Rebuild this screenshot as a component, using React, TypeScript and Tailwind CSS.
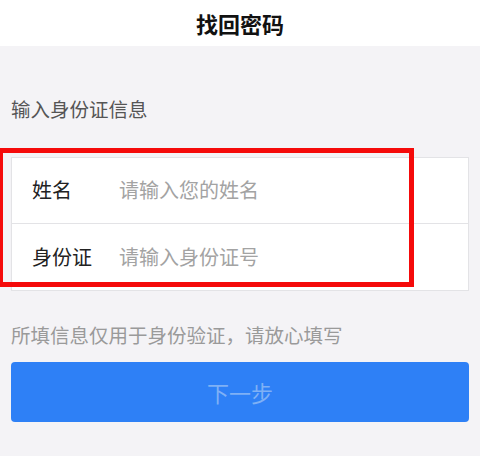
export default function App() {
  const font = { fontFamily: '"Noto Sans CJK SC", "Noto Sans", sans-serif' };

  return (
    <div className="relative w-[480px] h-[456px] bg-[#f4f3f6] overflow-hidden" style={font}>
      {/* Header */}
      <div className="h-[46px] bg-white flex items-center justify-center">
        <h1 className="text-[22px] font-bold text-[#111] leading-none">找回密码</h1>
      </div>

      <div className="px-[11px]">
        <p className="pt-[53px] text-[19.5px] leading-none text-[#555]">输入身份证信息</p>

        {/* Form card */}
        <div className="mt-[38px] bg-white border border-[#e3e3e6] flex flex-col">
          <div className="h-[66px] flex items-center pl-[20px] border-b border-[#e3e3e6]">
            <span className="w-[87px] text-[20px] text-[#222]">姓名</span>
            <span className="text-[20px] text-[#a3a3a3]">请输入您的姓名</span>
          </div>
          <div className="h-[66px] flex items-center pl-[20px]">
            <span className="w-[87px] text-[20px] text-[#222]">身份证</span>
            <span className="text-[20px] text-[#a3a3a3]">请输入身份证号</span>
          </div>
        </div>

        <p className="mt-[34px] text-[19.5px] leading-none text-[#9a9a9a]">所填信息仅用于身份验证，请放心填写</p>

        <button className="mt-[18px] w-full h-[60px] rounded-[4px] bg-[#2e80f6] text-[22px] text-[#7fb0f5] flex items-center justify-center">
          下一步
        </button>
      </div>

      {/* Red annotation frame */}
      <div className="absolute left-[-2px] top-[148px] w-[416px] h-[139px] border-[5px] border-[#f50a0a]" />
    </div>
  );
}
